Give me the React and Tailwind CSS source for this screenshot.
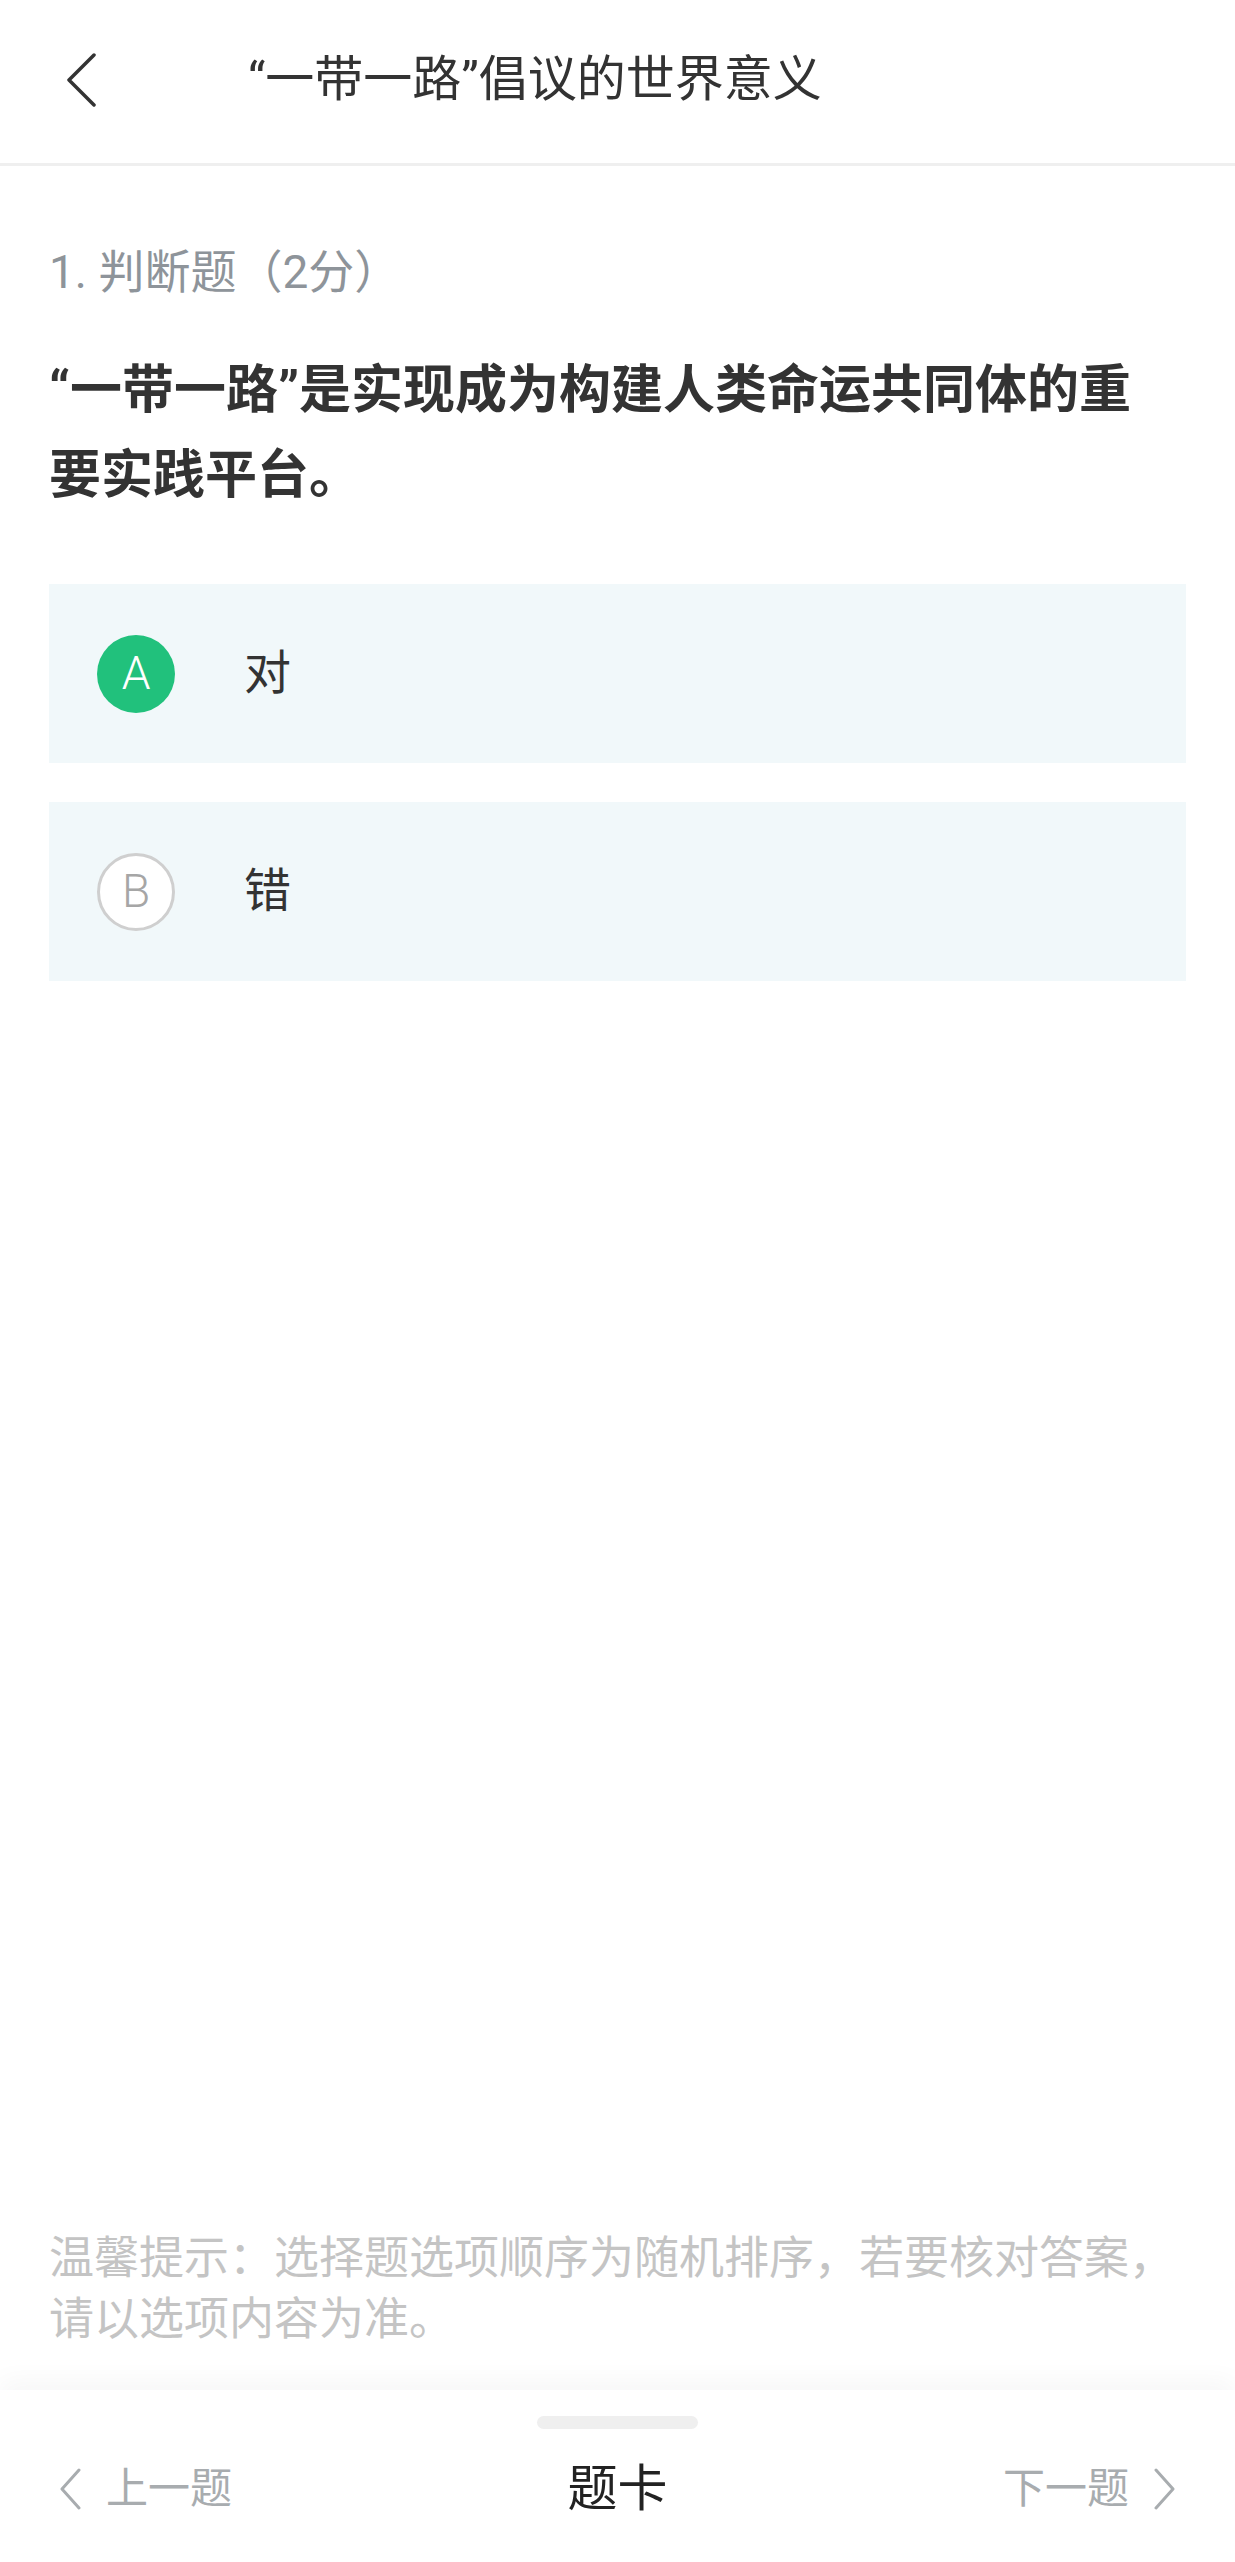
import { useState } from 'react';

const options = [
  { key: 'A', text: '对' },
  { key: 'B', text: '错' },
];

function Chevron({ dir = 'left', className = '' }) {
  const pts = dir === 'left' ? '20,2 3,21 20,40' : '2,2 19,21 2,40';
  return (
    <svg viewBox="0 0 22 42" className={className} fill="none" stroke="currentColor" strokeWidth="3" strokeLinecap="round" strokeLinejoin="round">
      <polyline points={pts} />
    </svg>
  );
}

export default function App() {
  const [selected, setSelected] = useState('A');

  return (
    <div className="flex h-[2562px] flex-col bg-white font-[Roboto,'Noto_Sans_CJK_SC',sans-serif] text-[#333]">
      {/* header */}
      <header className="flex h-[166px] shrink-0 items-center border-b-[3px] border-[#efefef] pb-[4px]">
        <svg viewBox="0 0 32 54" className="ml-[66px] h-[54px] w-[32px] text-[#333]" fill="none" stroke="currentColor" strokeWidth="3.5" strokeLinecap="round" strokeLinejoin="round">
          <polyline points="28,2 3,27 28,52" />
        </svg>
        <h1 className="ml-[150px] text-[49px] leading-none text-[#333]">“一带一路”倡议的世界意义</h1>
      </header>

      {/* question */}
      <main className="flex flex-1 flex-col px-[49px] pt-[78px]">
        <div className="text-[46px] leading-[57px] text-[#8e949a]">1. 判断题（2分）</div>
        <p className="mt-[47px] pr-[8px] text-[52px] font-bold leading-[85px] text-[#333]">
          “一带一路”是实现成为构建人类命运共同体的重要实践平台。
        </p>

        <div className="mt-[66px] flex flex-col gap-[39px]">
          {options.map((o) => {
            const active = selected === o.key;
            return (
              <button
                key={o.key}
                onClick={() => setSelected(o.key)}
                className="flex h-[179px] items-center bg-[#f1f8fa] pl-[48px] text-left"
              >
                <span
                  className={
                    active
                      ? 'flex h-[78px] w-[78px] items-center justify-center rounded-full bg-[#21c17c] text-[46px] font-light text-white'
                      : 'flex h-[78px] w-[78px] items-center justify-center rounded-full border-[3px] border-[#cfcfcf] bg-white text-[46px] font-light text-[#a6a6a6]'
                  }
                >
                  {o.key}
                </span>
                <span className="ml-[69px] text-[47px] text-[#333]">{o.text}</span>
              </button>
            );
          })}
        </div>

        <div className="flex-1" />

        <p className="pb-[40px] text-[45px] leading-[61px] text-[#c4c4c4]">
          温馨提示：选择题选项顺序为随机排序，若要核对答案，请以选项内容为准。
        </p>
      </main>

      {/* bottom bar */}
      <footer className="flex h-[172px] shrink-0 flex-col items-center bg-white pt-[26px] shadow-[0_-10px_24px_rgba(0,0,0,0.035)]">
        <div className="h-[13px] w-[161px] rounded-full bg-[#efefef]" />
        <div className="mt-[35px] flex w-full items-center justify-between px-[59px]">
          <button className="flex items-center text-[#a8acaf]">
            <Chevron dir="left" className="h-[42px] w-[22px]" />
            <span className="ml-[25px] text-[42px] leading-none">上一题</span>
          </button>
          <button className="text-[50px] leading-none text-[#222]">题卡</button>
          <button className="flex items-center text-[#a8acaf]">
            <span className="mr-[25px] text-[42px] leading-none">下一题</span>
            <Chevron dir="right" className="h-[42px] w-[22px]" />
          </button>
        </div>
      </footer>
    </div>
  );
}
